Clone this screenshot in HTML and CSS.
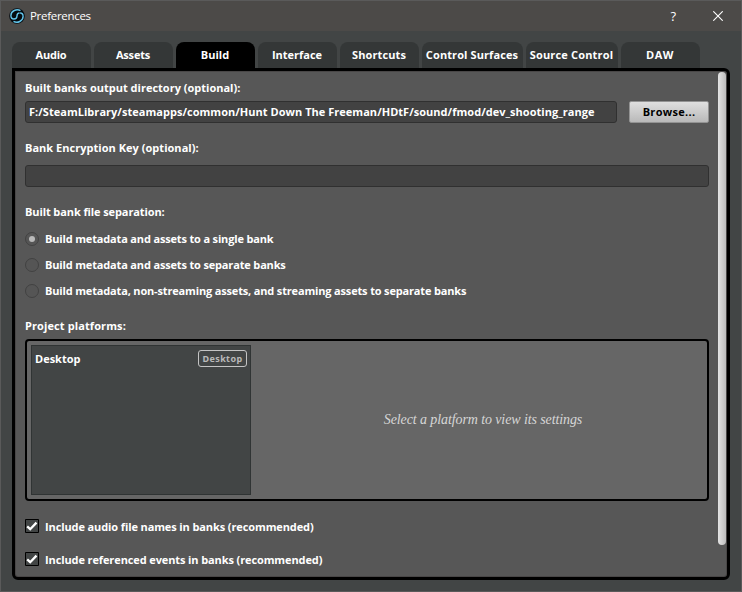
FILE: index.html
```html
<!DOCTYPE html>
<html lang="en">
<head>
<meta charset="utf-8">
<title>Preferences</title>
<link rel="stylesheet" href="styles.css">
</head>
<body>
<div class="window">
  <header class="titlebar">
    <svg class="logo" viewBox="0 0 16 16" width="16" height="16"><circle cx="8" cy="8" r="7.800" fill="#050b10"/><g fill="none" stroke="#62c4ea" stroke-width="1.400"><path d="M11.500 2.600C7.500 .3 2 3 1.900 7.500c0 2.300 1.300 3.500 3 3.500 1.900 0 3.100-1 3.100-3s1.200-3 2.600-3"/><path d="M4.500 13.400c4 2.300 9.500-.4 9.600-4.900 0-2.300-1.300-3.500-3-3.500"/></g></svg>
    <h1 class="title">Preferences</h1>
    <span class="help">?</span>
    <svg class="close" viewBox="0 0 10 10" width="10" height="10"><path d="M.3.3l9.400 9.400M9.700.3L.3 9.700" stroke="#fff" stroke-width="1.100"/></svg>
  </header>
  <nav class="tabs">
    <div class="tab"><span class="t-short">Audio</span></div>
    <div class="tab"><span class="t-short">Assets</span></div>
    <div class="tab active"><span>Build</span></div>
    <div class="tab"><span>Interface</span></div>
    <div class="tab"><span class="t-long">Shortcuts</span></div>
    <div class="tab wide"><span class="t-long">Control Surfaces</span></div>
    <div class="tab medium"><span class="t-source">Source Control</span></div>
    <div class="tab"><span class="t-daw">DAW</span></div>
  </nav>
  <main class="panel">
    <div class="content">
      <div class="label"><span>Built banks output directory (optional):</span></div>
      <div class="path-row">
        <div class="field path"><span class="l-path">F:/SteamLibrary/steamapps/common/Hunt Down The Freeman/HDtF/sound/fmod/dev_shooting_range</span></div>
        <button class="browse">Browse...</button>
      </div>
      <div class="label key-label"><span class="l-key">Bank Encryption Key (optional):</span></div>
      <div class="field key"></div>
      <div class="label sep-label"><span class="l-sep">Built bank file separation:</span></div>
      <div class="radios">
        <div class="option"><i class="radio on"></i><span>Build metadata and assets to a single bank</span></div>
        <div class="option"><i class="radio"></i><span>Build metadata and assets to separate banks</span></div>
        <div class="option"><i class="radio"></i><span>Build metadata, non-streaming assets, and streaming assets to separate banks</span></div>
      </div>
      <div class="label platform-label"><span class="l-plat">Project platforms:</span></div>
      <section class="platforms">
        <div class="list">
          <div class="item"><span class="name">Desktop</span><span class="badge">Desktop</span></div>
        </div>
        <div class="empty"><span class="hint">Select a platform to view its settings</span></div>
      </section>
      <div class="check first"><svg class="box" viewBox="0 0 14 14" width="14" height="14"><path d="M.5.5h13v13H.5z" fill="#424545" stroke="#000"/><path d="M2.200 7.400l3 2.800 6.300-6.600" fill="none" stroke="#fff" stroke-width="2.300"/></svg><span>Include audio file names in banks (recommended)</span></div>
      <div class="check"><svg class="box" viewBox="0 0 14 14" width="14" height="14"><path d="M.5.5h13v13H.5z" fill="#424545" stroke="#000"/><path d="M2.200 7.400l3 2.800 6.300-6.600" fill="none" stroke="#fff" stroke-width="2.300"/></svg><span>Include referenced events in banks (recommended)</span></div>
    </div>
    <div class="scrollbar"><div class="thumb"></div></div>
  </main>
</div>
</body>
</html>
```
FILE: styles.css
```css
* { box-sizing: border-box; }
body { margin: 0; width: 742px; height: 592px; overflow: hidden; font: bold 11px/16px "Open Sans", sans-serif; color: #fff; }
span { white-space: nowrap; }
.window { width: 742px; height: 592px; border: 1px solid #5a5a5a; background: #424545; display: flex; flex-direction: column; }
.titlebar { height: 30px; background: #4c4a48; display: flex; align-items: center; padding: 0 18px 1px 8px; flex: none; }
.title { margin: 0 auto 0 5px; font: 11.500px/16px "Open Sans", sans-serif; letter-spacing: -.3px; }
.help { font: 13px/16px "Open Sans", sans-serif; margin-right: 37px; }
.close { display: block; }
.tabs { display: flex; gap: 3px; padding: 11px 0 0 11px; height: 37px; flex: none; }
.tab { width: 79px; height: 26px; padding-right: 1px; border-radius: 8px 8px 0 0; background: #343737; line-height: 26px; display: flex; justify-content: center; }
.tab.wide { width: 101px; }
.tab.medium { width: 92px; }
.tab.active { background: #000; }
.t-short { letter-spacing: -.2px; }
.t-long { letter-spacing: .1px; }
.t-source { letter-spacing: .17px; }
.t-daw { letter-spacing: .5px; }
.panel { width: 718px; height: 512px; margin-left: 11px; border: 3px solid #000; border-radius: 0 6px 6px 6px; background: #575757; display: flex; box-shadow: inset 0 0 0 1px #494747; }
.content { width: 694px; padding: 9px 0 0 10px; flex: none; }
.label { height: 16px; }
.path-row { display: flex; gap: 12px; margin-top: 5px; }
.field { height: 22px; border: 1px solid #303030; border-radius: 3px; background: #424242; }
.path { width: 592px; padding: 2px 0 0 3px; }
.l-path { letter-spacing: .03px; }
.l-key { letter-spacing: .03px; }
.l-sep { letter-spacing: -.1px; }
.l-plat { letter-spacing: .1px; }
.browse { width: 80px; height: 22px; border: 1px solid #939393; border-radius: 2px; background: linear-gradient(#dfdfdf, #b9b9b9); font: bold 11px/16px "Open Sans", sans-serif; letter-spacing: .3px; color: #000; padding: 0; }
.key-label { margin-top: 17px; }
.key { margin-top: 9px; }
.sep-label { margin-top: 17px; }
.radios { margin-top: 6px; }
.option { height: 26px; display: flex; align-items: center; gap: 6px; letter-spacing: -.16px; }
.radio { width: 14px; height: 14px; border: 1px solid #424242; border-radius: 50%; background: #555; display: flex; align-items: center; justify-content: center; }
.radio.on::before { content: ""; width: 6px; height: 6px; border-radius: 50%; background: #b9b9b9; }
.platform-label { margin-top: 14px; }
.platforms { width: 684px; height: 162px; margin-top: 5px; border: 2px solid #000; border-radius: 4px; background: #666; padding: 4px; display: flex; }
.list { width: 220px; height: 150px; border: 1px solid #303434; background: #424545; padding: 4px 3px 0 3px; }
.item { display: flex; justify-content: space-between; height: 18px; }
.name { padding-top: 1px; }
.badge { width: 49px; height: 17px; border: 1px solid #c4c4c4; border-radius: 3px; color: #b9b9b9; font-family: "Noto Sans", sans-serif; font-size: 9px; letter-spacing: .4px; line-height: 15px; text-align: center; }
.empty { flex: 1; display: flex; align-items: center; justify-content: center; padding-left: 12px; }
.hint { font: italic 14px/16px "Liberation Serif", serif; letter-spacing: -.1px; color: #d6d6d6; }
.check { height: 16px; display: flex; align-items: center; gap: 6px; margin-top: 17px; letter-spacing: -.11px; }
.check.first { margin-top: 18px; }
.box { margin-bottom: 2px; }
.scrollbar { padding: 1px 0 0 9px; }
.thumb { width: 8px; height: 473px; border-radius: 4px; background: linear-gradient(90deg, #e4e4e4, #bdbdbd); }
```
